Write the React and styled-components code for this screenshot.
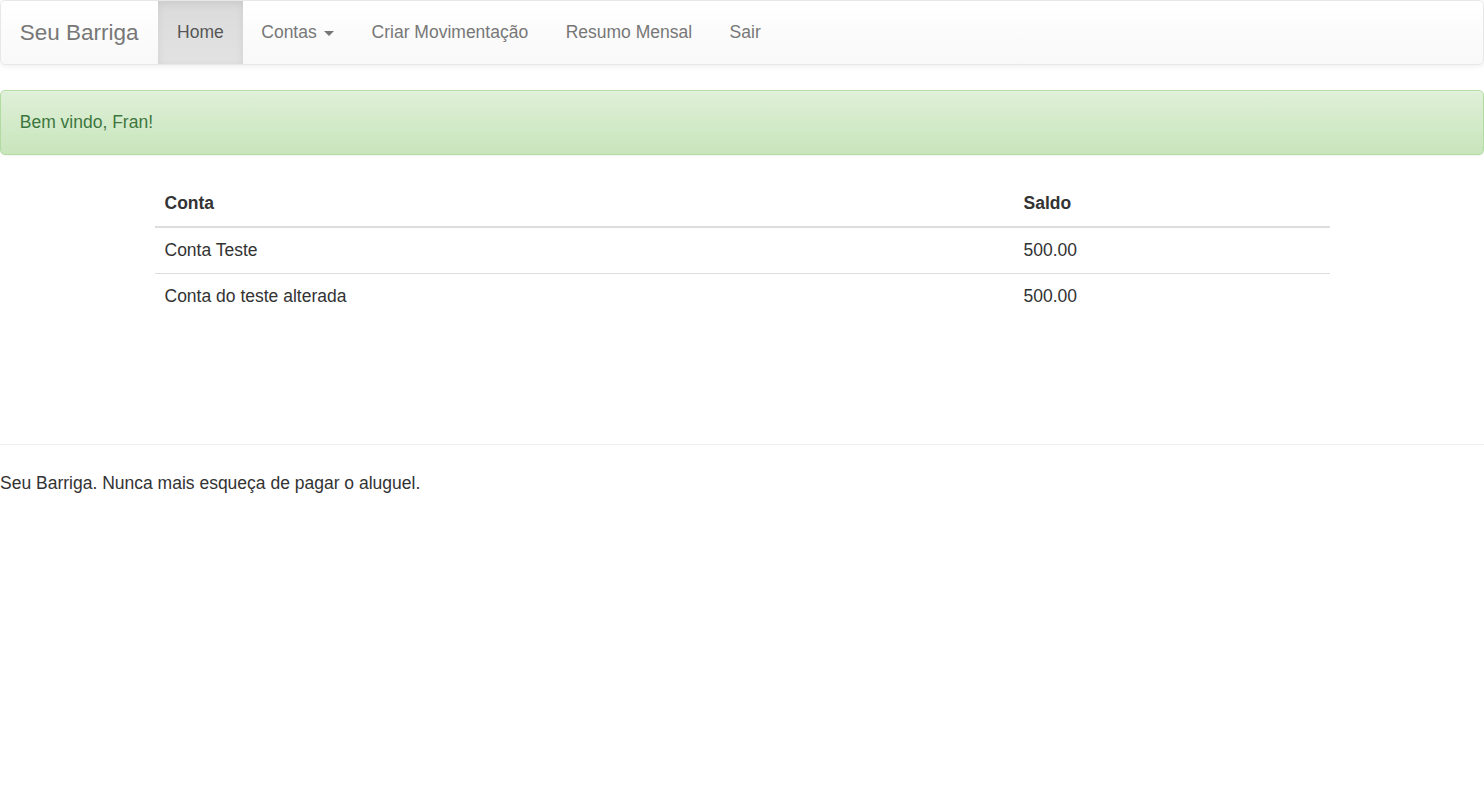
import styled, { createGlobalStyle } from "styled-components";

const Global = createGlobalStyle`
  html, body {
    margin: 0;
    padding: 0;
    background: #fff;
  }
  body {
    font-family: "Liberation Sans", Arial, Helvetica, sans-serif;
    font-size: 17.5px;
    line-height: 25px;
    color: #333;
  }
  * {
    box-sizing: border-box;
  }
`;

const Navbar = styled.nav`
  min-height: 65px;
  margin-bottom: 25px;
  border: 1.25px solid #e7e7e7;
  border-radius: 5px;
  background-image: linear-gradient(to bottom, #fff 0, #f8f8f8 100%);
  box-shadow: inset 0 1px 0 rgba(255, 255, 255, 0.15),
    0 1px 6px rgba(0, 0, 0, 0.075);
`;

const NavInner = styled.div`
  display: flex;
  align-items: stretch;
  padding: 0 18.75px;
`;

const Brand = styled.a`
  margin-left: -18.75px;
  padding: 18.75px 19.75px 18.75px 18.75px;
  height: 62.5px;
  font-size: 22.5px;
  line-height: 25px;
  color: #777;
  text-decoration: none;
  text-shadow: 0 1px 0 rgba(255, 255, 255, 0.25);
`;

const NavList = styled.ul`
  display: flex;
  margin: 0;
  padding: 0;
  list-style: none;
`;

const NavLink = styled.a`
  display: block;
  padding: 18.75px;
  line-height: 25px;
  color: ${(p) => (p.$active ? "#555" : "#777")};
  text-decoration: none;
  text-shadow: 0 1px 0 rgba(255, 255, 255, 0.25);
  background-image: ${(p) =>
    p.$active ? "linear-gradient(to bottom, #dbdbdb 0, #e2e2e2 100%)" : "none"};
  box-shadow: ${(p) => (p.$active ? "inset 0 3px 9px rgba(0, 0, 0, 0.075)" : "none")};
`;

const Caret = styled.span`
  display: inline-block;
  width: 0;
  height: 0;
  margin-left: 2.5px;
  vertical-align: middle;
  border-top: 5px solid;
  border-right: 5px solid transparent;
  border-left: 5px solid transparent;
`;

const Alert = styled.div`
  padding: 18.75px;
  margin-bottom: 26px;
  border: 1.25px solid #b2dba1;
  border-radius: 5px;
  color: #3c763d;
  background-image: linear-gradient(to bottom, #dff0d8 0, #c8e5bc 100%);
  text-shadow: 0 1px 0 rgba(255, 255, 255, 0.2);
  box-shadow: inset 0 1px 0 rgba(255, 255, 255, 0.25),
    0 1px 2px rgba(0, 0, 0, 0.05);
`;

const Container = styled.div`
  width: 1212.5px;
  margin: 0 auto;
  padding: 0 18.75px;
`;

const Table = styled.table`
  width: 100%;
  border-collapse: collapse;
  border-spacing: 0;
  margin-bottom: 25px;
`;

const Th = styled.th`
  width: ${(p) => p.$width || "auto"};
  padding: 10px;
  text-align: left;
  font-weight: bold;
  line-height: 25px;
  vertical-align: bottom;
  border-bottom: 2.5px solid #ddd;
`;

const Td = styled.td`
  padding: 10px;
  line-height: 25px;
  vertical-align: top;
  border-top: 1.25px solid #ddd;
`;

const Spacer = styled.div`
  height: 100px;
`;

const Rule = styled.hr`
  margin: 0 0 26px;
  border: 0;
  border-top: 1.25px solid #eee;
`;

const Footer = styled.footer`
  line-height: 25px;
`;

const contas = [
  { nome: "Conta Teste", saldo: "500.00" },
  { nome: "Conta do teste alterada", saldo: "500.00" },
];

export default function App() {
  return (
    <>
      <Global />
      <Navbar>
        <NavInner>
          <Brand href="#">Seu Barriga</Brand>
          <NavList>
            <li>
              <NavLink href="#" $active>
                Home
              </NavLink>
            </li>
            <li>
              <NavLink href="#">
                Contas <Caret />
              </NavLink>
            </li>
            <li>
              <NavLink href="#">Criar Movimentação</NavLink>
            </li>
            <li>
              <NavLink href="#">Resumo Mensal</NavLink>
            </li>
            <li>
              <NavLink href="#">Sair</NavLink>
            </li>
          </NavList>
        </NavInner>
      </Navbar>
      <Alert>Bem vindo, Fran!</Alert>
      <Container>
        <Table>
          <thead>
            <tr>
              <Th $width="859px">Conta</Th>
              <Th>Saldo</Th>
            </tr>
          </thead>
          <tbody>
            {contas.map((c) => (
              <tr key={c.nome}>
                <Td>{c.nome}</Td>
                <Td>{c.saldo}</Td>
              </tr>
            ))}
          </tbody>
        </Table>
      </Container>
      <Spacer />
      <Rule />
      <Footer>Seu Barriga. Nunca mais esqueça de pagar o aluguel.</Footer>
    </>
  );
}
